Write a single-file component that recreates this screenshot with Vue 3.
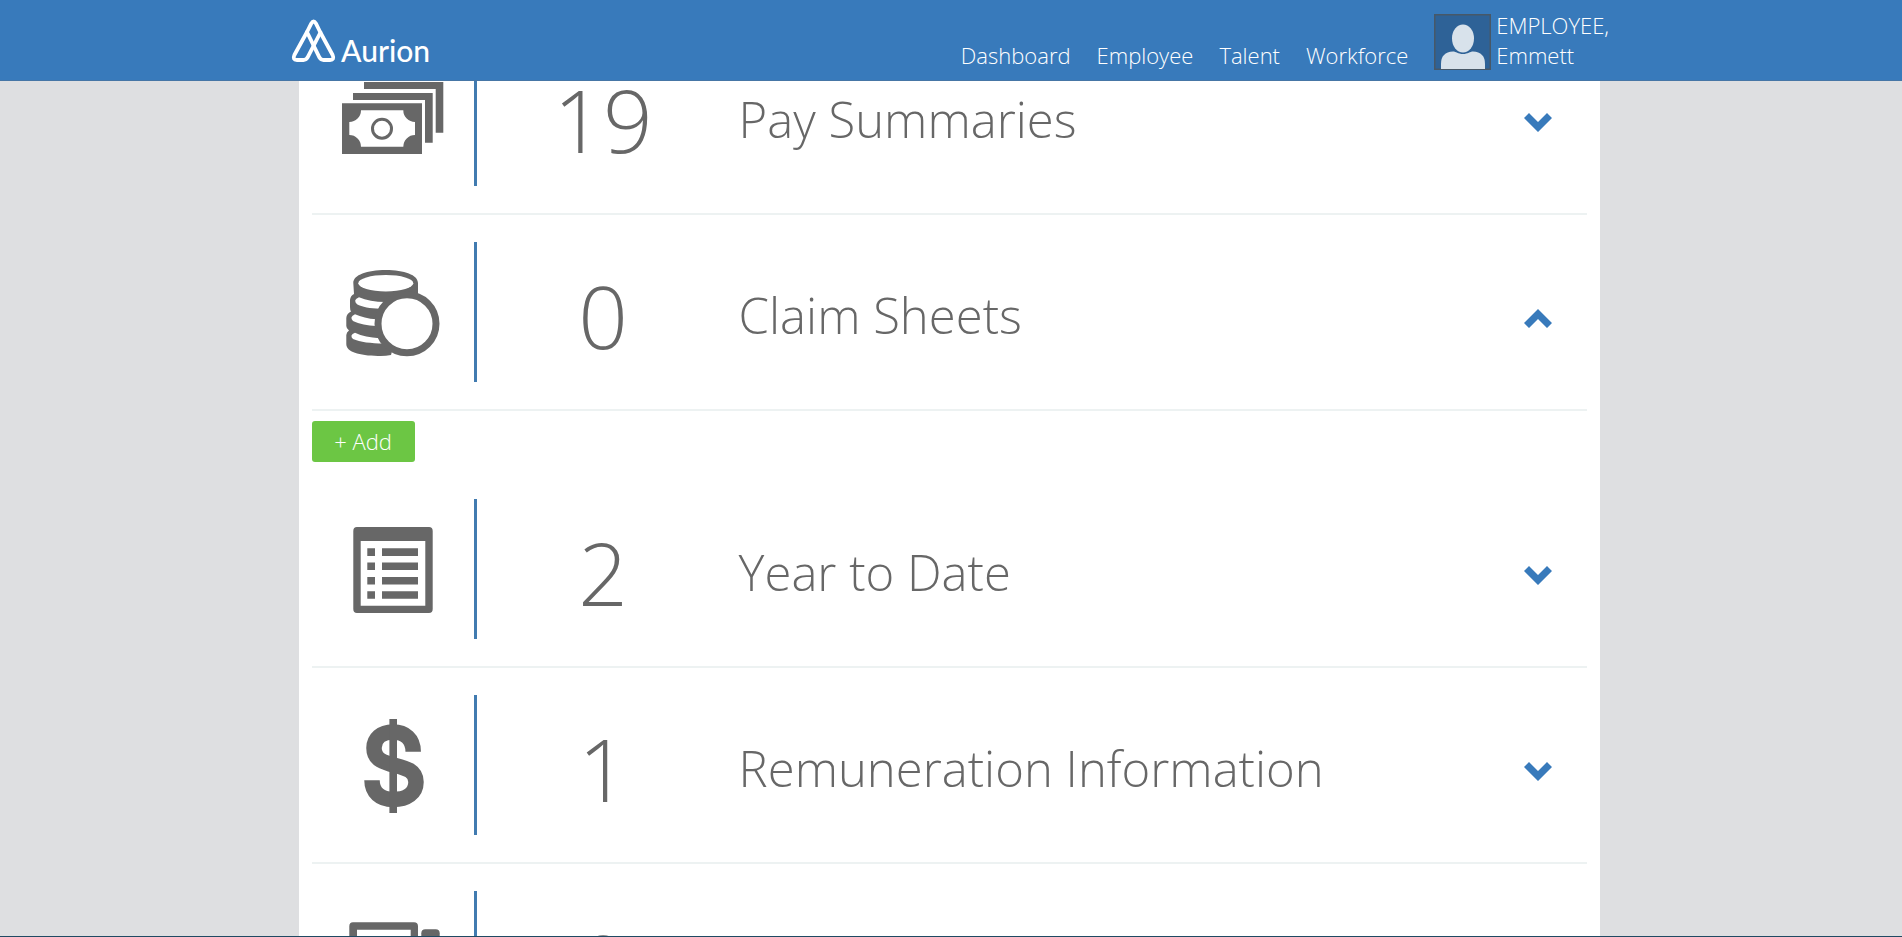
<script setup>
import { ref } from 'vue'

const links = ['Dashboard', 'Employee', 'Talent', 'Workforce']

const sections = ref([
  { icon: 'money', count: 19, title: 'Pay Summaries', open: false },
  { icon: 'coins', count: 0, title: 'Claim Sheets', open: true },
  { icon: 'list', count: 2, title: 'Year to Date', open: false },
  { icon: 'dollar', count: 1, title: 'Remuneration Information', open: false },
  { icon: 'devices', count: 0, title: '', open: false },
])
</script>

<template>
  <div class="page">
    <header class="topbar">
      <div class="topbar-inner">
        <a class="brand" href="#">
          <svg class="mark" viewBox="0 0 50 50" aria-hidden="true">
            <g fill="none" stroke="#fff" stroke-width="3.8" stroke-linejoin="round" stroke-linecap="round">
              <path d="M18 17L5.4 40Q3.2 44.8 8 45H14.5Q17 45 18.5 42.6L31.4 17.5" />
              <path d="M31.4 17.5L43.6 40Q45.8 44.8 41 45H34.5Q32 45 30.5 42.6L18 17L22.3 8.4Q24.6 4.6 26.9 8.4Z" />
            </g>
          </svg>
          <span class="wordmark">Aurion</span>
        </a>
        <nav class="nav">
          <a v-for="link in links" :key="link" href="#">{{ link }}</a>
        </nav>
        <a class="user" href="#">
          <svg class="avatar" viewBox="0 0 57 56" aria-hidden="true">
            <rect x="0.75" y="0.75" width="55.5" height="54.5" fill="#2e6297" stroke="#475868" stroke-width="1.5" />
            <path d="M7 55V50Q7 38 19 37.500C22 37.500 24 40 29 40S36 37.500 39 37.500Q51 38 51 50V55Z" fill="#d8e2eb" />
            <ellipse cx="29" cy="24.500" rx="11" ry="14" fill="#d8e2eb" />
          </svg>
          <span class="user-name">EMPLOYEE,<br />Emmett</span>
        </a>
      </div>
    </header>

    <main class="panel">
      <section v-for="item in sections" :key="item.icon">
        <div class="row">
          <div class="icon-cell">
            <svg class="icon" viewBox="0 0 104 104" aria-hidden="true">
              <g v-if="item.icon === 'money'" fill="#676767">
                <path d="M23 18H102.300V68.700H94.700V25H23Z" />
                <path d="M12 29H91.700V78.700H84V36H12Z" />
                <path fill-rule="evenodd" d="M1 39.300H81V90H1ZM20 46.300A11.700 11.700 0 0 1 8.300 58V71A11.700 11.700 0 0 1 20 82.700H62.300A11.700 11.700 0 0 1 74 71V58A11.700 11.700 0 0 1 62.300 46.300Z" />
                <circle cx="41" cy="64.700" r="9.500" fill="none" stroke="#676767" stroke-width="3" />
              </g>
              <g v-else-if="item.icon === 'coins'">
                <path fill="#676767" d="M12.300 23C12.300 15 26 10 44.700 10S77 15 77 23V34L60 60L50 95Q44 96.300 37 96C18 95.500 5.300 92 5.300 84V75Q5.500 72 8 70.500Q5.300 68.500 5.300 66V58Q5.500 53.500 10 51.500Q9 50 9 47V40Q9.500 35.500 13 34Z" />
                <ellipse cx="44.800" cy="23.200" rx="27.500" ry="8.200" fill="#fff" />
                <path fill="#fff" d="M18 37.300C25 40.500 34 42 44.500 42Q41 45 39 48.700C29 48.700 21 47 16 44.300Q11.500 40 18 37.300ZM14 54.300C20 57 27 58.800 35.500 59.300Q34.700 63 35 66C27 65.700 18 64 12 61Q8 57 14 54.300ZM14 72.700C21 76 29 77.500 38.500 78.300Q40 81 42.500 83.500C30 83.500 19 82 12 79Q8 75 14 72.700Z" />
                <circle cx="66" cy="63.700" r="29" fill="#fff" stroke="#676767" stroke-width="7" />
              </g>
              <g v-else-if="item.icon === 'list'" fill="#676767">
                <path fill-rule="evenodd" d="M16 10H88Q91.700 10 91.700 14V92Q91.700 96 88 96H16Q12.300 96 12.300 92V14Q12.300 10 16 10ZM19.700 24V88.700H84.300V24Z" />
                <path d="M26.300 31.300H34V39H26.300ZM41 31.300H77V39H41ZM26.300 45.500H34V53H26.300ZM41 45.500H77V53H41ZM26.300 60H34V67.500H26.300ZM41 60H77V67.500H41ZM26.300 74.200H34V81.800H26.300ZM41 74.200H77V81.800H41Z" />
              </g>
              <g v-else-if="item.icon === 'dollar'" fill="none" stroke="#676767">
                <path stroke-width="15.500" d="M72.200 38.700C72.200 26 64 19 52 19C40 19 33 26 33 35C33 59 75 46 75 69C75 80 66 86.500 52 86.500C39 86.500 31 79 31 67.300" />
                <path stroke-width="7.600" d="M52.200 6V100" />
              </g>
              <g v-else fill="#676767">
                <path fill-rule="evenodd" d="M12 13.300H73Q77 13.300 77 17.300V90H8.300V17.300Q8.300 13.300 12 13.300ZM16 20.700V82H69.700V20.700Z" />
                <rect x="80.300" y="20.300" width="18.400" height="70" rx="4" />
              </g>
            </svg>
          </div>
          <div class="count">{{ item.count }}</div>
          <h2 class="title">{{ item.title }}</h2>
          <button
            class="toggle"
            type="button"
            :aria-expanded="item.open"
            aria-label="Toggle section"
            @click="item.open = !item.open"
          >
            <svg viewBox="0 0 28 19" width="28" height="19" aria-hidden="true">
              <path v-if="item.open" d="M0 14L5 19L14 10L23 19L28 14L14 0Z" fill="#387abb" />
              <path v-else d="M0 5L5 0L14 9L23 0L28 5L14 19Z" fill="#387abb" />
            </svg>
          </button>
        </div>
        <div v-if="item.open" class="details">
          <button class="add" type="button">+ Add</button>
        </div>
      </section>
    </main>
    <div class="bottom-edge"></div>
  </div>
</template>

<style>
body {
  background: #dedfe1;
}
</style>

<style scoped>
.page {
  height: 100vh;
  overflow: hidden;
  font-family: "Open Sans", sans-serif;
  font-weight: 300;
  color: #676767;
}
.topbar {
  position: fixed;
  top: 0;
  left: 0;
  right: 0;
  z-index: 2;
  height: 81px;
  box-sizing: border-box;
  background: #387abb;
  border-bottom: 1px solid #4676a6;
}
.topbar-inner {
  display: flex;
  align-items: flex-start;
  width: 69.4%;
  margin-left: 15.2%;
}
.topbar a {
  color: #fff;
  text-decoration: none;
}
.brand {
  display: flex;
  padding-top: 15px;
  margin-right: auto;
}
.mark {
  width: 50px;
  height: 50px;
}
.wordmark {
  font-family: Lato, sans-serif;
  font-weight: 500;
  font-size: 30px;
  line-height: 36px;
  padding-top: 17px;
  padding-left: 2px;
}
.nav {
  display: flex;
  gap: 26px;
  padding-top: 40px;
  font-size: 22px;
  line-height: 30px;
}
.user {
  display: flex;
  gap: 5px;
  padding-left: 26px;
  font-size: 22px;
  line-height: 30px;
}
.avatar {
  width: 57px;
  height: 56px;
  margin-top: 14px;
}
.user-name {
  padding-top: 10px;
}
.panel {
  box-sizing: border-box;
  width: 68.4%;
  margin-left: 15.7%;
  padding: 19px 13px 0;
  background: #fff;
}
.row {
  display: grid;
  grid-template-columns: 165px 253px 1fr 98px;
  align-items: center;
  box-sizing: border-box;
  height: 196px;
  border-bottom: 2px solid #edf2f2;
}
.icon-cell {
  display: flex;
  align-items: center;
  justify-content: center;
  box-sizing: border-box;
  height: 140px;
  border-right: 3px solid #417bb0;
}
.icon {
  width: 104px;
  height: 104px;
}
.count {
  padding-top: 5px;
  font-size: 87px;
  line-height: 120px;
  text-align: center;
}
.title {
  margin: 0;
  padding: 5px 0 0 9px;
  font-size: 49px;
  font-weight: 300;
  line-height: 68px;
}
.toggle {
  display: flex;
  justify-content: center;
  padding: 13px 0 0;
  border: 0;
  background: none;
  cursor: pointer;
}
.details {
  padding: 10px 0;
}
.add {
  display: block;
  width: 103px;
  height: 41px;
  padding: 0;
  border: 0;
  border-radius: 3px;
  background: #6cc644;
  color: #fff;
  font: inherit;
  font-size: 22px;
  line-height: 41px;
}
.bottom-edge {
  position: fixed;
  left: 0;
  right: 0;
  bottom: 0;
  height: 1px;
  background: #1f4a63;
}
</style>
